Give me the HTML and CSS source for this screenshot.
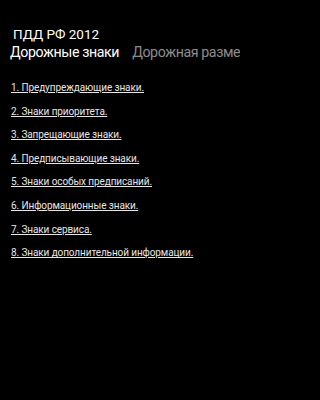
FILE: index.html
```html
<!DOCTYPE html>
<html lang="ru">
<head>
<meta charset="utf-8">
<link rel="stylesheet" href="styles.css">
</head>
<body>
<div class="app">
  <div class="title">ПДД РФ 2012</div>
  <div class="tabs">
    <span class="tab active">Дорожные знаки</span>
    <span class="tab">Дорожная разметка</span>
  </div>
  <ul class="list">
    <li><a href="#">1. Предупреждающие знаки.</a></li>
    <li><a href="#">2. Знаки приоритета.</a></li>
    <li><a href="#">3. Запрещающие знаки.</a></li>
    <li><a href="#">4. Предписывающие знаки.</a></li>
    <li><a href="#">5. Знаки особых предписаний.</a></li>
    <li><a href="#">6. Информационные знаки.</a></li>
    <li><a href="#">7. Знаки сервиса.</a></li>
    <li><a href="#">8. Знаки дополнительной информации.</a></li>
  </ul>
</div>
</body>
</html>
```
FILE: styles.css
```css
html, body {
  margin: 0;
  padding: 0;
  background: #000;
}
.app {
  width: 240px;
  height: 400px;
  overflow: hidden;
  font-family: Roboto, "Noto Sans", sans-serif;
  color: #fff;
}
.title {
  padding: 26px 0 0 13px;
  font-size: 13.5px;
  line-height: 16px;
}
.tabs {
  display: flex;
  gap: 13px;
  padding-left: 10px;
  white-space: nowrap;
  font-size: 14.2px;
  letter-spacing: -0.4px;
  line-height: 18px;
  margin-top: 1px;
}
.tab { color: #8c8c8c; }
.tab.active { color: #fff; }
.list {
  list-style: none;
  margin: 0;
  padding: 20px 0 0 11px;
  display: flex;
  flex-direction: column;
  gap: 10.6px;
}
.list li {
  font-size: 10px;
  letter-spacing: -0.1px;
  line-height: 13px;
}
.list a {
  color: #e6e6e6;
  text-decoration: underline;
}
```
